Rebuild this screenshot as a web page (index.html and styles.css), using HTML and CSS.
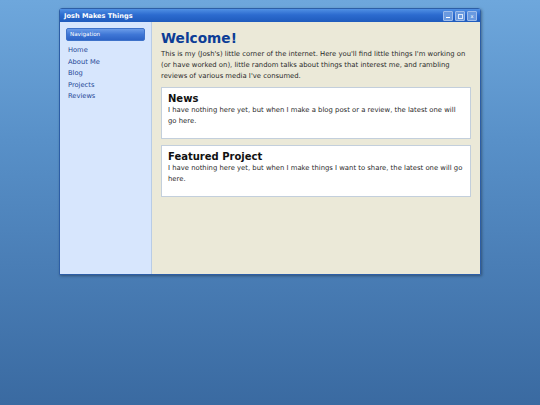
FILE: index.html
```html
<!DOCTYPE html>
<html lang="en">

<head>
  <meta charset="UTF-8">
  <meta name="viewport" content="width=device-width, initial-scale=1.0">
  <title>Josh Makes Things</title>
  <link rel="stylesheet" href="styles.css">
</head>

<body>

  <div class="window">

    <!-- Title bar -->
    <div class="title-bar">
      <span class="title">Josh Makes Things</span>
      <div class="controls">
        <span class="btn btn-min"></span>
        <span class="btn btn-max"></span>
        <span class="btn btn-close">x</span>
      </div>
    </div>

    <div class="window-body">

      <!-- Sidebar -->
      <nav class="sidebar">
        <div class="nav-header">Navigation</div>
        <ul class="nav-links">
          <li><a href="#">Home</a></li>
          <li><a href="#">About Me</a></li>
          <li><a href="#">Blog</a></li>
          <li><a href="#">Projects</a></li>
          <li><a href="#">Reviews</a></li>
        </ul>
      </nav>

      <!-- Main content -->
      <main class="content">
        <h1>Welcome!</h1>
        <p class="intro">This is my (Josh's) little corner of the internet. Here you'll find little things I'm working on (or have worked on), little random talks about things that interest me, and rambling reviews of various media I've consumed.</p>

        <section class="card">
          <h2>News</h2>
          <p>I have nothing here yet, but when I make a blog post or a review, the latest one will go here.</p>
        </section>

        <section class="card">
          <h2>Featured Project</h2>
          <p>I have nothing here yet, but when I make things I want to share, the latest one will go here.</p>
        </section>
      </main>

    </div>
  </div>

</body>

</html>
```

FILE: styles.css
```css
/* Desktop background */
body {
  margin: 0;
  height: 405px;
  background: linear-gradient(to bottom, #6ea7dc 0%, #5890c8 35%, #4a7eb6 65%, #3a6aa1 100%);
  font-family: "DejaVu Sans", Verdana, sans-serif;
  overflow: hidden;
}

/* The window */
.window {
  margin: 8px 0 0 59px;
  width: 420px;
  height: 265px;
  border: 1px solid #2c5ea6;
  border-radius: 3px 3px 0 0;
  display: flex;
  flex-direction: column;
  box-shadow: 1px 1px 3px rgba(0, 0, 0, 0.35);
}

.title-bar {
  height: 13px;
  background: linear-gradient(to bottom, #5090e4 0%, #2c6bcf 45%, #1f5bbd 100%);
  display: flex;
  align-items: center;
  justify-content: space-between;
  padding: 0 3px 0 4px;
}
.title {
  color: #fff;
  font-size: 6.6px;
  font-weight: bold;
}
.controls {
  display: flex;
  gap: 2px;
}
.btn {
  width: 8px;
  height: 8px;
  border: 1px solid #9fbdea;
  border-radius: 1px;
  background: #6a9ae0;
  position: relative;
  color: #fff;
  font-size: 5px;
  line-height: 8px;
  text-align: center;
  box-sizing: content-box;
}
.btn-min::after {
  content: "";
  position: absolute;
  left: 2px;
  bottom: 2px;
  width: 4px;
  height: 1px;
  background: #fff;
}
.btn-max::after {
  content: "";
  position: absolute;
  left: 2px;
  top: 2px;
  width: 3px;
  height: 3px;
  border: 1px solid #dbe8fb;
}

.window-body {
  flex: 1;
  display: flex;
}

/* Sidebar */
.sidebar {
  width: 85px;
  padding: 6px 0 0 6px;
  background: #d7e6fd;
  border-right: 1px solid #b8cce6;
}
.nav-header {
  width: 74px;
  height: 11px;
  padding-left: 3px;
  border: 1px solid #3e72c9;
  border-radius: 2px;
  background: linear-gradient(to bottom, #6a9be9 0%, #3f77d6 50%, #2d63c6 100%);
  color: #fff;
  font-size: 5.6px;
  line-height: 11px;
}
.nav-links {
  list-style: none;
  margin: 4px 0 0 2px;
  padding: 0;
}
.nav-links li {
  font-size: 6.7px;
  line-height: 11.5px;
}
.nav-links a {
  color: #1f4696;
  text-decoration: none;
}

/* Main area */
.content {
  flex: 1;
  background: #ebe9d8;
  padding: 8px 9px 0 9px;
}
.content h1 {
  margin: 0 0 2px 0;
  font-size: 13.7px;
  line-height: 17px;
  color: #0c3d96;
}
.intro {
  margin: 0 0 5px 0;
  font-size: 6.85px;
  line-height: 11px;
  color: #2a2a2a;
}
.card {
  background: #fff;
  border: 1px solid #c3cfdc;
  padding: 5px 6px 11px 6px;
  margin-bottom: 6px;
}
.card h2 {
  margin: 0;
  font-size: 10px;
  line-height: 12px;
  color: #111;
}
.card p {
  margin: 0;
  font-size: 6.85px;
  line-height: 11px;
  color: #2a2a2a;
}
```
